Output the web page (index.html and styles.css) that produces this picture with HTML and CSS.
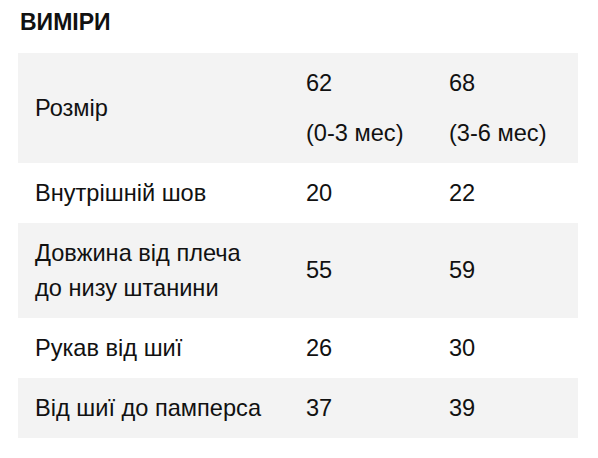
FILE: index.html
```html
<!DOCTYPE html>
<html lang="uk">
<head>
<meta charset="utf-8">
<title>Виміри</title>
<link rel="stylesheet" href="styles.css">
</head>
<body>
<section class="measures">
  <h2 class="title">ВИМІРИ</h2>
  <table class="size-table">
    <colgroup>
      <col class="c1"><col class="c2"><col class="c3">
    </colgroup>
    <tbody>
      <tr class="shaded">
        <td>Розмір</td>
        <td><p class="line">62</p><p class="line sub">(0-3 мес)</p></td>
        <td><p class="line">68</p><p class="line sub">(3-6 мес)</p></td>
      </tr>
      <tr>
        <td>Внутрішній шов</td>
        <td>20</td>
        <td>22</td>
      </tr>
      <tr class="shaded">
        <td>Довжина від плеча<br>до низу штанини</td>
        <td>55</td>
        <td>59</td>
      </tr>
      <tr>
        <td>Рукав від шиї</td>
        <td>26</td>
        <td>30</td>
      </tr>
      <tr class="shaded">
        <td>Від шиї до памперса</td>
        <td>37</td>
        <td>39</td>
      </tr>
    </tbody>
  </table>
</section>
</body>
</html>
```
FILE: styles.css
```css
* { box-sizing: border-box; }
html, body {
  margin: 0;
  padding: 0;
  background: #ffffff;
}
body {
  font-family: "Liberation Sans", Arial, sans-serif;
  color: #111111;
}
.measures {
  padding: 9px 20px 0 18px;
}
.title {
  margin: 0 0 18px 2px;
  font-size: 23px;
  font-weight: 700;
  line-height: 26px;
}
.size-table {
  width: 560px;
  border-collapse: collapse;
  table-layout: fixed;
  font-size: 23.6px;
  line-height: 35px;
}
.c1 { width: 271px; }
.c2 { width: 143px; }
.c3 { width: 146px; }
.size-table td {
  padding: 12.5px 17px;
  vertical-align: middle;
  font-weight: 400;
}
.size-table tr.shaded td {
  background: #f3f3f3;
}
.line {
  margin: 0;
}
.line.sub {
  margin-top: 15px;
}
```
